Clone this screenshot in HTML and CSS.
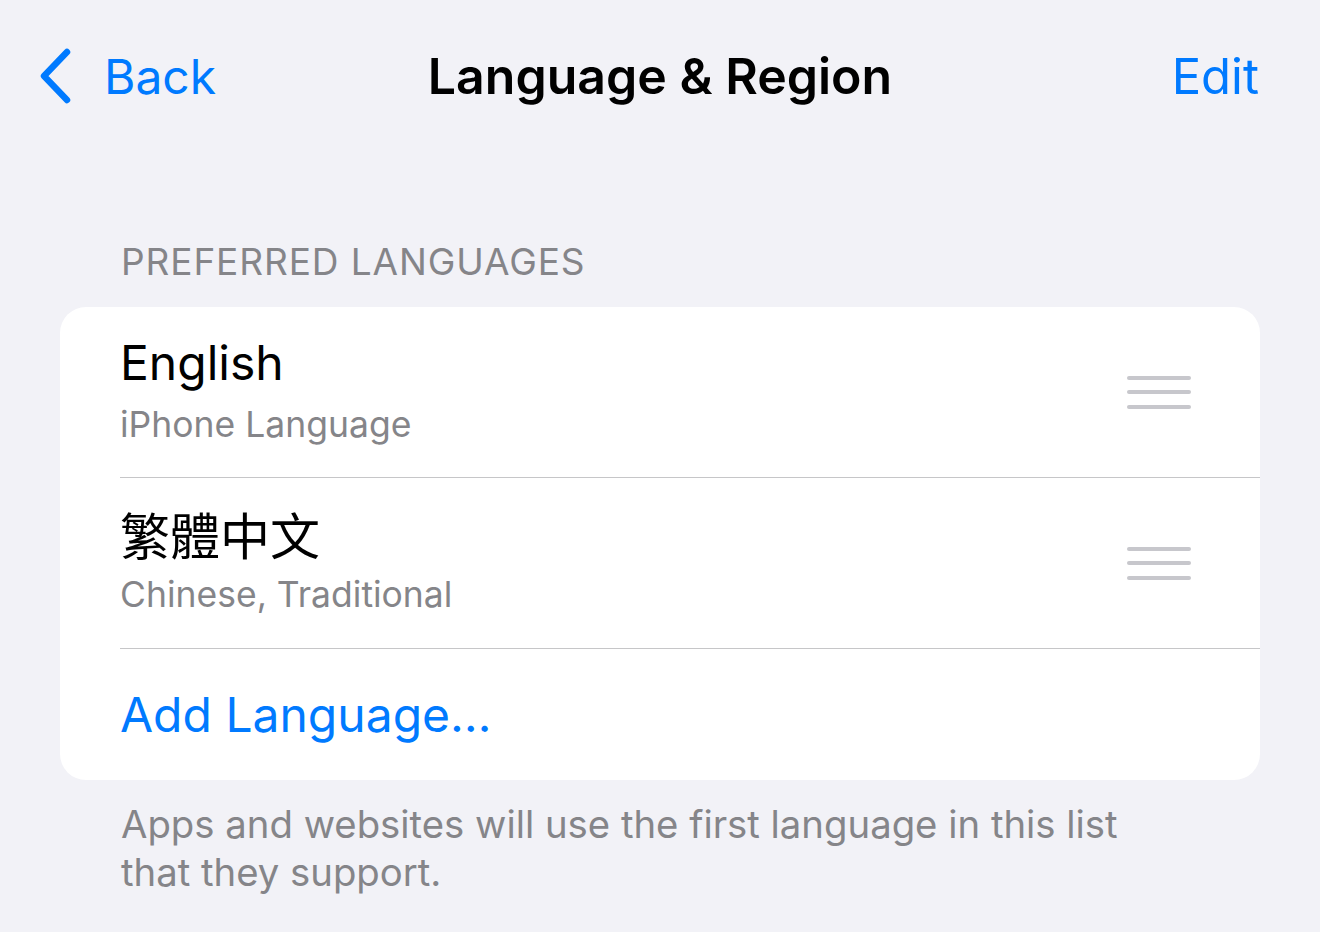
FILE: index.html
```html
<!DOCTYPE html>
<html lang="en">
<head>
  <meta charset="UTF-8" />
  <meta name="viewport" content="width=device-width, initial-scale=1.0"/>
  <title>Language &amp; Region</title>
  <link rel="stylesheet" href="styles.css">
</head>
<body>

<div class="navbar">
  <a class="back" href="#">
    <svg class="chevron" width="34" height="56" viewBox="0 0 34 56">
      <path d="M29 4 L6 28 L29 52" fill="none" stroke="#007aff" stroke-width="6.5" stroke-linecap="round" stroke-linejoin="round"/>
    </svg>
    <span>Back</span>
  </a>
  <h1 class="title">Language &amp; Region</h1>
  <a class="edit" href="#">Edit</a>
</div>

<div class="section">
  <div class="section-header">PREFERRED LANGUAGES</div>
  <div class="card">
    <div class="row">
      <div class="row-text">
        <div class="lang">English</div>
        <div class="sub">iPhone Language</div>
      </div>
      <div class="handle"><i></i><i></i><i></i></div>
    </div>
    <div class="row">
      <div class="row-text">
        <div class="lang cjk">繁體中文</div>
        <div class="sub">Chinese, Traditional</div>
      </div>
      <div class="handle"><i></i><i></i><i></i></div>
    </div>
    <div class="row add">
      <a href="#">Add Language…</a>
    </div>
  </div>
  <div class="section-footer">Apps and websites will use the first language in this list that they support.</div>
</div>

</body>
</html>
```

FILE: styles.css
```css
body {
  margin: 0;
  background: #f2f2f7;
  font-family: Inter, "Noto Sans", sans-serif;
  color: #000;
  width: 1320px;
  height: 932px;
  overflow: hidden;
}
a { text-decoration: none; color: #007aff; }

.navbar {
  display: grid;
  grid-template-columns: 1fr auto 1fr;
  align-items: center;
  height: 100px;
  padding: 26px 38px 0 38px;
}
.back { display: flex; align-items: center; gap: 32px; font-size: 48px; }
.chevron { display: block; }
.title { margin: 0; font-size: 50px; font-weight: 600; }
.edit { font-size: 49px; justify-self: end; margin-right: 23px; }

.section { padding: 0 60px; margin-top: 113px; }
.section-header {
  padding-left: 61px;
  font-size: 37px;
  color: #858589;
  letter-spacing: 0.9px;
  margin-bottom: 23px;
}
.card {
  background: #fff;
  border-radius: 26px;
  overflow: hidden;
}
.row {
  display: flex;
  align-items: center;
  margin-left: 60px;
  height: 170px;
  border-bottom: 1.5px solid #c6c6c8;
  padding-right: 69px;
}
.row-text { flex: 1; padding-bottom: 6px; }
.lang { font-size: 48px; line-height: 60px; }
.lang.cjk {
  font-family: "Noto Sans CJK TC", sans-serif;
  font-size: 50px;
  margin-top: -1px;
  margin-bottom: 9px;
}
.sub { font-size: 35.5px; color: #858589; margin-top: 10px; }
.handle { display: flex; flex-direction: column; gap: 10.5px; }
.handle i { display: block; width: 64px; height: 4px; border-radius: 2px; background: #c7c7cc; }
.row.add { height: 131px; border-bottom: none; }
.row.add a { font-size: 48px; }

.section-footer {
  padding: 20px 130px 0 61px;
  font-size: 38.3px;
  line-height: 48px;
  color: #858589;
}
```
